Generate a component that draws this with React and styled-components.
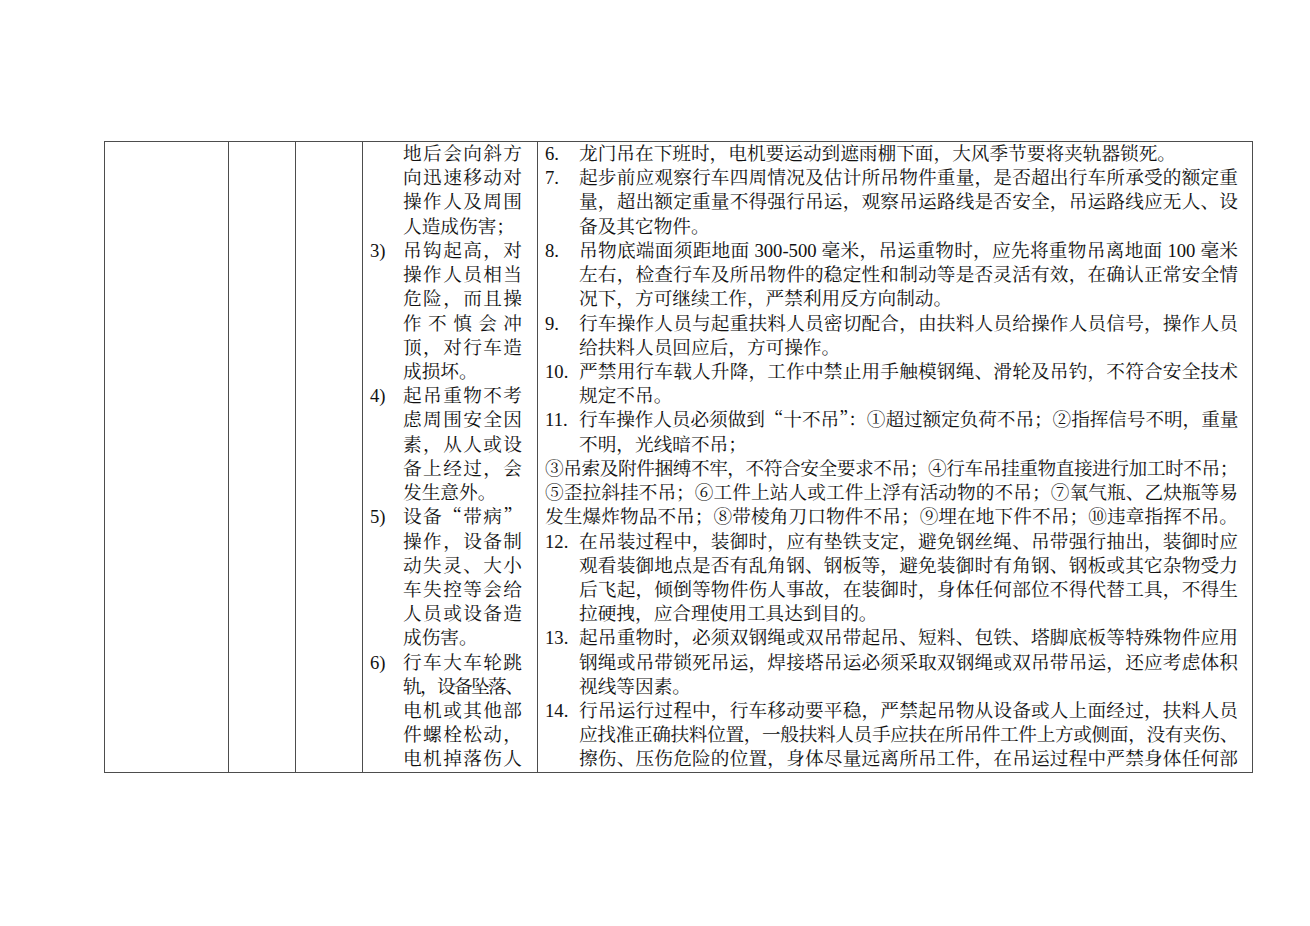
import React from 'react';
import styled, { createGlobalStyle } from 'styled-components';

const FONT = '"Liberation Serif", "Noto Serif CJK SC", "Noto Sans CJK SC", serif';
const CJK = '"Noto Serif CJK SC", "Noto Sans CJK SC", serif';

const GlobalStyle = createGlobalStyle`
  html, body {
    margin: 0;
    padding: 0;
    background: #fff;
  }
  body {
    font-family: ${FONT};
  }
`;

const Page = styled.div`
  width: 1310px;
  height: 926px;
  box-sizing: border-box;
  padding: 141px 57px 0 104px;
  background: #fff;
  color: #111;
  font-size: 18.67px;
  line-height: 24.23px;
`;

const Table = styled.div`
  display: grid;
  grid-template-columns: 123px 67px 67px 175px 715px;
  width: max-content;
  border: 1px solid #4d4d4d;
`;

const Cell = styled.div`
  box-sizing: border-box;
  border-left: ${p => (p.$first ? 'none' : '1px solid #4d4d4d')};
  padding: 0 ${p => p.$pr || 0}px 0 ${p => p.$pl || 0}px;
`;

const Item = styled.div`
  display: flex;
`;

const Num = styled.div`
  flex: 0 0 ${p => p.$w}px;
`;

const Body = styled.div`
  flex: 1;
  min-width: 0;
`;

const Line = styled.div`
  height: 24.23px;
  text-align: justify;
  text-align-last: ${p => (p.$fill ? 'justify' : 'left')};
  letter-spacing: ${p => p.$ls || 0}px;
`;

const Quote = styled.span`
  font-family: ${CJK};
  line-height: 1;
`;

const hazards = [
  { n: '', lines: ['地后会向斜方', '向迅速移动对', '操作人及周围', '人造成伤害；'] },
  { n: '3)', lines: ['吊钩起高，对', '操作人员相当', '危险，而且操', '作不慎会冲', '顶，对行车造', '成损坏。'] },
  { n: '4)', lines: ['起吊重物不考', '虑周围安全因', '素，从人或设', '备上经过，会', '发生意外。'] },
  { n: '5)', lines: ['设备“带病”', '操作，设备制', '动失灵、大小', '车失控等会给', '人员或设备造', '成伤害。'] },
  { n: '6)', lines: ['行车大车轮跳', '轨，设备坠落、', '电机或其他部', '件螺栓松动，', '电机掉落伤人'], open: true },
];

const rules = [
  { n: '6.', lines: ['龙门吊在下班时，电机要运动到遮雨棚下面，大风季节要将夹轨器锁死。'] },
  { n: '7.', lines: ['起步前应观察行车四周情况及估计所吊物件重量，是否超出行车所承受的额定重', '量，超出额定重量不得强行吊运，观察吊运路线是否安全，吊运路线应无人、设', '备及其它物件。'] },
  { n: '8.', lines: ['吊物底端面须距地面 300-500 毫米，吊运重物时，应先将重物吊离地面 100 毫米', '左右，检查行车及所吊物件的稳定性和制动等是否灵活有效，在确认正常安全情', '况下，方可继续工作，严禁利用反方向制动。'] },
  { n: '9.', lines: ['行车操作人员与起重扶料人员密切配合，由扶料人员给操作人员信号，操作人员', '给扶料人员回应后，方可操作。'] },
  { n: '10.', lines: ['严禁用行车载人升降，工作中禁止用手触模钢绳、滑轮及吊钓，不符合安全技术', '规定不吊。'] },
  { n: '11.', lines: ['行车操作人员必须做到“十不吊”：①超过额定负荷不吊；②指挥信号不明，重量', '不明，光线暗不吊；'] },
  { n: null, lines: ['③吊索及附件捆缚不牢，不符合安全要求不吊；④行车吊挂重物直接进行加工时不吊；', '⑤歪拉斜挂不吊；⑥工件上站人或工件上浮有活动物的不吊；⑦氧气瓶、乙炔瓶等易', '发生爆炸物品不吊；⑧带棱角刀口物件不吊；⑨埋在地下件不吊；⑩违章指挥不吊。'], open: true },
  { n: '12.', lines: ['在吊装过程中，装御时，应有垫铁支定，避免钢丝绳、吊带强行抽出，装御时应', '观看装御地点是否有乱角钢、钢板等，避免装御时有角钢、钢板或其它杂物受力', '后飞起，倾倒等物件伤人事故，在装御时，身体任何部位不得代替工具，不得生', '拉硬拽，应合理使用工具达到目的。'] },
  { n: '13.', lines: ['起吊重物时，必须双钢绳或双吊带起吊、短料、包铁、塔脚底板等特殊物件应用', '钢绳或吊带锁死吊运，焊接塔吊运必须采取双钢绳或双吊带吊运，还应考虑体积', '视线等因素。'] },
  { n: '14.', lines: ['行吊运行过程中，行车移动要平稳，严禁起吊物从设备或人上面经过，扶料人员', '应找准正确扶料位置，一般扶料人员手应扶在所吊件工件上方或侧面，没有夹伤、', '擦伤、压伤危险的位置，身体尽量远离所吊工件，在吊运过程中严禁身体任何部'], open: true },
];

// measure each line; lines wider than the column are squeezed a little
let ctx = null;
const squeeze = (text, width) => {
  if (!ctx) {
    ctx = document.createElement('canvas').getContext('2d');
    ctx.font = `18.67px ${FONT}`;
  }
  const w = ctx.measureText(text.replace(/[“”]/g, '国')).width;
  return w > width - 1 ? (width - 1 - w) / text.length : 0;
};

const withQuotes = text =>
  text.split(/([“”])/).map((part, i) =>
    part === '“' || part === '”' ? <Quote key={i}>{part}</Quote> : part
  );

const renderLines = (item, width) =>
  item.lines.map((text, i) => {
    const last = i === item.lines.length - 1;
    return (
      <Line key={i} $fill={!last || item.open} $ls={squeeze(text, width)}>
        {withQuotes(text)}
      </Line>
    );
  });

const App = () => (
  <Page lang="zh-CN">
    <GlobalStyle />
    <Table>
      <Cell $first />
      <Cell />
      <Cell />
      <Cell $pl={7} $pr={15}>
        {hazards.map((item, i) => (
          <Item key={i}>
            <Num $w={33}>{item.n}</Num>
            <Body>{renderLines(item, 119)}</Body>
          </Item>
        ))}
      </Cell>
      <Cell $pl={7} $pr={14}>
        {rules.map((item, i) =>
          item.n === null ? (
            <div key={i}>{renderLines(item, 693)}</div>
          ) : (
            <Item key={i}>
              <Num $w={34}>{item.n}</Num>
              <Body>{renderLines(item, 659)}</Body>
            </Item>
          )
        )}
      </Cell>
    </Table>
  </Page>
);

export default App;
